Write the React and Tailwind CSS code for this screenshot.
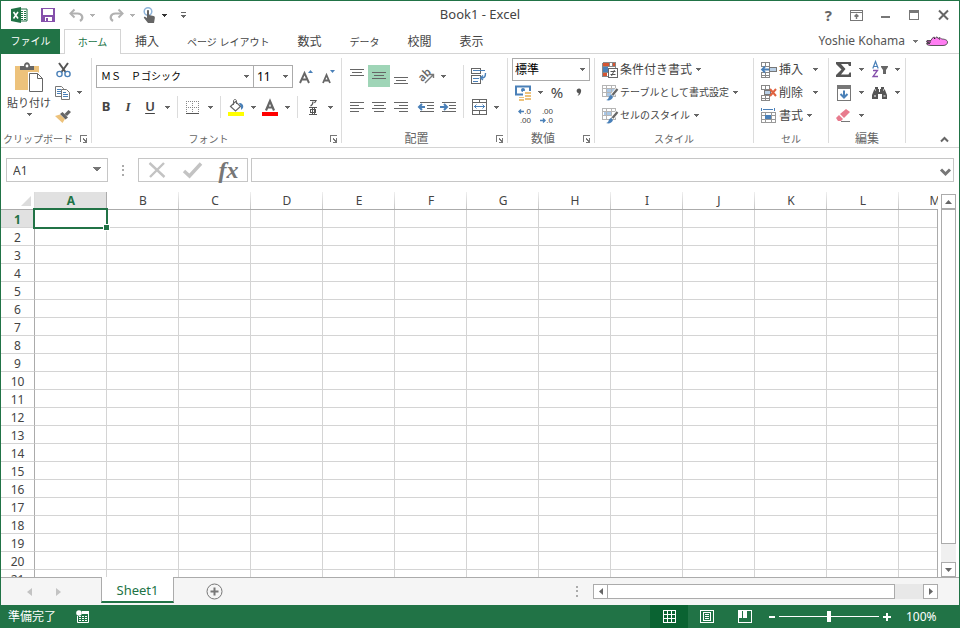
import { useState } from 'react';
import clsx from 'clsx';

const columns = ['A', 'B', 'C', 'D', 'E', 'F', 'G', 'H', 'I', 'J', 'K', 'L', 'M'];
const rows = Array.from({ length: 21 }, (_, i) => i + 1);

const tabs = [
  { label: '挿入' },
  { label: 'ページ レイアウト', kana: true },
  { label: '数式' },
  { label: 'データ', kana: true },
  { label: '校閲' },
  { label: '表示' },
];

// Small drawing helpers

const Icon = ({ w = 16, h = 16, crisp, className, children }) => (
  <svg
    width={w}
    height={h}
    viewBox={`0 0 ${w} ${h}`}
    fill="none"
    stroke="none"
    shapeRendering={crisp ? 'crispEdges' : 'auto'}
    className={clsx('shrink-0 overflow-visible', className)}
    aria-hidden="true"
  >
    {children}
  </svg>
);

const Caret = ({ className }) => (
  <Icon w={5} h={3} crisp className={className || 'text-[#666]'}>
    <path d="M0 0h5v1H0zM1 1h3v1H1zM2 2h1v1H2z" fill="currentColor" />
  </Icon>
);

const CaretButton = ({ label, className }) => (
  <button aria-label={label} className="flex h-[22px] w-3 shrink-0 items-center justify-center">
    <Caret className={className} />
  </button>
);

const Tool = ({ label, active, className, children }) => (
  <button
    aria-label={label}
    className={clsx('flex h-[22px] w-[22px] shrink-0 items-center justify-center', active && 'bg-[#9fd5b7]', className)}
  >
    {children}
  </button>
);

const Separator = () => <span className="mx-1 h-[22px] w-px shrink-0 bg-[#dcdcdc]" />;

const Dots = () => (
  <Icon w={2} h={11} crisp>
    <path d="M0 0h2v2H0zM0 4h2v2H0zM0 9h2v2H0z" fill="#ababab" />
  </Icon>
);

const Lines = ({ rows: bars }) => (
  <Icon w={14} h={14} crisp>
    {bars.map(([x, y, width]) => (
      <rect key={y} x={x} y={y} width={width} height="1" fill="#666" />
    ))}
  </Icon>
);

// Quick access and title bar icons

const ExcelLogo = () => (
  <Icon>
    <path d="M9 2h7v12H9z" fill="#fff" stroke="#217346" />
    <path d="M10 4h2v1h-2zM13 4h2v1h-2zM10 6h2v1h-2zM13 6h2v1h-2zM10 8h2v1h-2zM13 8h2v1h-2zM10 10h2v1h-2zM13 10h2v1h-2zM10 12h2v1h-2zM13 12h2v1h-2z" fill="#217346" />
    <path d="M0 2 10 0v16L0 14z" fill="#217346" />
    <path d="m2.500 5 4.500 6.500M7 5l-4.500 6.500" stroke="#fff" strokeWidth="1.600" />
  </Icon>
);

const SaveIcon = () => (
  <Icon w={14} h={14} crisp>
    <path d="M0 0h14v14H0z" fill="#8550ab" />
    <path d="M2 1h10v6H2zM4 9h7v4H4z" fill="#fff" />
    <path d="M5 10h2v3H5z" fill="#8550ab" />
  </Icon>
);

const UndoIcon = ({ flip }) => (
  <Icon w={15} h={13} className={flip && '-scale-x-100'}>
    <path d="M5.500.5 1.500 4.500l4 4" stroke="#b1b1b1" strokeWidth="2" />
    <path d="M2 4.500h6.500c5 0 6.500 5 2.500 7.500" stroke="#b1b1b1" strokeWidth="2.200" />
  </Icon>
);

const TouchIcon = () => (
  <Icon w={13} h={16}>
    <circle cx="5" cy="4.500" r="3.800" stroke="#8fb4d9" strokeWidth="1.500" />
    <path d="M4 4c0-1.300 2-1.300 2 0v4l4.500 1c1.200.3 1.500 1 1.300 2.200L11 16H5L1 11c-.6-1 .5-1.800 1.400-1.100L4 11z" fill="#666" />
  </Icon>
);

const CustomizeIcon = () => (
  <Icon w={7} h={7} crisp>
    <path d="M0 0h5v1H0zM0 3h5v1H0zM1 4h3v1H1zM2 5h1v1H2z" fill="#666" />
  </Icon>
);

const RibbonOptionsIcon = () => (
  <Icon w={13} h={11}>
    <path d="M.5.5h12v10H.5zM.5 2.500h12" stroke="#777" shapeRendering="crispEdges" />
    <path d="M6.500 9V5M4.500 6.500l2-2 2 2" stroke="#777" strokeWidth="1.400" />
  </Icon>
);

const Pig = () => (
  <Icon w={22} h={10}>
    <path d="M1 4.500h4l1-2 2-1.500 1.500 1L11 .8 12 2.500l2-1 1.500 1.500c3 0 6 1 6 3S20 9.500 17 9.500H6C3 9.500.5 9 .5 7.500H4L.5 6z" fill="#ff7df2" stroke="#333" strokeWidth=".8" />
    <path d="M1 6h4M8 2.500h1M13 3h1" stroke="#222" />
  </Icon>
);

// Clipboard

const PasteIcon = () => (
  <Icon w={29} h={31}>
    <path d="M0 4h24v24H0z" fill="#edc27b" />
    <path d="M5 4h4c0-5 6-5 6 0h4v4H5z" fill="#666" />
    <circle cx="12" cy="4" r="1.400" fill="#fff" />
    <path d="M13 10h10l6 6v15H13z" fill="#fff" />
    <path d="M14.500 11.500h8l5 5v13h-13z" fill="#fff" stroke="#666" />
    <path d="M22.500 11.500v5h5" stroke="#666" />
  </Icon>
);

const CutIcon = () => (
  <Icon w={15} h={16}>
    <path d="m3 1 6.500 9M12 1 5.500 10" stroke="#555" strokeWidth="2" />
    <circle cx="3.500" cy="12" r="2.600" stroke="#4a80b8" strokeWidth="1.400" />
    <circle cx="11.500" cy="12" r="2.600" stroke="#4a80b8" strokeWidth="1.400" />
  </Icon>
);

const CopyIcon = () => (
  <Icon w={16} h={14}>
    <path d="M.5.5h6l2 2v8h-8z" stroke="#777" fill="#fff" />
    <path d="M2 3h4v1H2zM2 5h4v1H2zM2 7h4v1H2z" fill="#4a80b8" />
    <path d="M6.500 3.500h5l3 3v7h-8z" stroke="#777" fill="#fff" />
    <path d="M8 6h3v1H8zM8 8h5v1H8zM8 10h5v1H8z" fill="#4a80b8" />
  </Icon>
);

const BrushIcon = () => (
  <Icon w={16} h={14}>
    <path d="M0 7 5 5.500 10 10l-2.500 4z" fill="#edc27b" />
    <path d="m5 5 2.500-2L13 8.500 10.500 10.500z" fill="#666" />
    <path d="m9.500 5 4-4L16 3l-4 4z" fill="#666" />
  </Icon>
);

// Font

const BordersIcon = () => (
  <Icon w={14} h={13} crisp>
    <path d="M.5 0v11M6.500 0v11M12.500 0v11M0 .5h13M0 6.500h13" stroke="#888" strokeDasharray="1 1" />
    <path d="M0 12h13v1H0z" fill="#555" />
  </Icon>
);

const FillIcon = () => (
  <Icon w={16} h={17}>
    <path d="M0 13h16v4H0z" fill="#ff0" />
    <path d="m2.500 7.500 5-5 5 5-5 4.500z" fill="#fff" stroke="#666" strokeWidth="1.200" />
    <path d="M5.500 6V2c0-2 3-2 3 0v3" stroke="#666" />
    <path d="M11 4c3 0 5 2 4 5l-2 2V8z" fill="#4a80b8" />
  </Icon>
);

const FontColorIcon = () => (
  <Icon w={16} h={17}>
    <path d="M0 13h16v4H0z" fill="#f00" />
    <path d="M4 11.500 8 2l4 9.500M5.500 8.500h5" stroke="#666" strokeWidth="2.200" />
  </Icon>
);

const RubyIcon = () => (
  <Icon w={9} h={17}>
    <path d="M1 1.500h6L5.500 4M4 2.500C4 5 3.500 6 1.500 7" stroke="#555" strokeWidth="1.200" />
    <path d="M0 8.500h8M0 15.500h8M1.500 10.500h5v3h-5zM3.500 8v8M5.500 8v8" stroke="#555" shapeRendering="crispEdges" />
  </Icon>
);

const GrowFont = ({ down }) => (
  <Icon w={14} h={15}>
    {down ? (
      <path d="m1 14 3.500-8L8 14M2 11.500h5" stroke="#666" strokeWidth="1.800" />
    ) : (
      <path d="M0 14 4.500 4 9 14M1.500 10.500h6" stroke="#666" strokeWidth="1.900" />
    )}
    <path d={down ? 'M8 1h5l-2.500 3z' : 'M8 4h5l-2.500-3z'} fill="#4a80b8" />
  </Icon>
);

// Alignment

const OrientationIcon = () => (
  <span className="relative flex h-4 w-4 items-center justify-center">
    <span className="-rotate-45 pb-1 text-[11px] font-semibold leading-3 text-[#666]">ab</span>
    <Icon className="absolute inset-0">
      <path d="m7 15 8-8M11.500 6.500h4V10" stroke="#777" strokeWidth="1.400" />
    </Icon>
  </span>
);

const IndentIcon = ({ right }) => (
  <Icon w={17} h={12}>
    <path d="M2 1.500h14M9 4.500h7M9 7.500h7M2 10.500h14" stroke="#666" shapeRendering="crispEdges" />
    <path d={right ? 'M0 6h7M4 3l3 3-3 3' : 'M7 6H1M4 3 1 6l3 3'} stroke="#4a80b8" strokeWidth="2" />
  </Icon>
);

const WrapIcon = () => (
  <Icon w={16} h={16}>
    <path d="M.5.5h9v5h-9zM.5 7.500h9v8h-9z" stroke="#666" shapeRendering="crispEdges" />
    <path d="M2 2.500h12M2 10.500h6M2 13.500h5" stroke="#4a80b8" shapeRendering="crispEdges" />
    <path d="M14.500 5c0 4-1 5-4.500 5M12 7.500 9.500 10l2.500 2" stroke="#4a80b8" strokeWidth="1.400" />
  </Icon>
);

const MergeIcon = () => (
  <Icon w={15} h={16}>
    <path d="M.5.5h14v15H.5zM.5 3.500h14M.5 11.500h14M7.500 0v3.500M7.500 11.500V16" stroke="#666" shapeRendering="crispEdges" />
    <path d="M2 7.500h11M4.500 5.500l-2 2 2 2M10.500 5.500l2 2-2 2" stroke="#4a80b8" />
  </Icon>
);

// Number

const CurrencyIcon = () => (
  <Icon w={17} h={16}>
    <path d="M1 1.500h14v8H1z" stroke="#4a80b8" strokeWidth="2" />
    <circle cx="8" cy="5" r="2" fill="#4a80b8" />
    <path d="M8 6h9v10H3v-5h5z" fill="#fff" />
    <path d="M10 7h6v2h-6zM10 10h6v2h-6zM10 13h6v2h-6zM4 12h5v1H4zM4 14h5v2H4z" fill="#edc27b" />
  </Icon>
);

const SmallArrow = ({ right }) => (
  <Icon w={6} h={5}>
    <path d={right ? 'M0 2.500h5M3 .5l2 2-2 2' : 'M6 2.500H1M3 .5l-2 2 2 2'} stroke="#4a80b8" strokeWidth="1.400" />
  </Icon>
);

const DecimalIcon = ({ less }) => (
  <span className="flex w-4 flex-col font-['Liberation_Sans'] text-[8px] leading-[9px] text-[#444]">
    <span className="flex items-center justify-end">
      {!less && <SmallArrow />}
      <span>{less ? '.00' : '.0'}</span>
    </span>
    <span className="flex items-center justify-end">
      {less && <SmallArrow right />}
      <span>{less ? '.0' : '.00'}</span>
    </span>
  </span>
);

// Styles

const ConditionalIcon = () => (
  <Icon>
    <path d="M1 1h6v3H1zM1 11h4v3H1z" fill="#d65532" />
    <path d="M11 1h3v3h-3z" fill="#d65532" />
    <path d="M1 5h5v5H1z" fill="#4a80b8" />
    <path d="M.5.5h13v5M.5.500v14H6M.5 4.500h13M.5 10.500H6M7.500 0v5M10.500 0v5" stroke="#888" shapeRendering="crispEdges" />
    <path d="M6.500 6.500h9v9h-9z" fill="#fff" stroke="#666" shapeRendering="crispEdges" />
    <path d="M8.500 9.500h5M8.500 12.500h5M12.500 8l-3 6" stroke="#555" />
  </Icon>
);

const TableStyleIcon = ({ cell }) => (
  <Icon>
    <path d={cell ? 'M2 4h8v4H2z' : 'M5 4h8v8H5z'} fill="#a9c7e6" />
    <path d="M.5.5h13v11H.5zM.5 3.500h13M4.500 0v12M9.500 0v12M.5 7.500h13" stroke="#b5b5b5" shapeRendering="crispEdges" />
    <path d="m15.500 4-5 6" stroke="#fff" strokeWidth="4" />
    <path d="m15.500 4-5 6" stroke="#666" strokeWidth="2.200" />
    <path d="M4 15c3 0 2-4 5-5l2 2c-1 3-4 4-7 3z" fill="#4a80b8" />
  </Icon>
);

// Cells

const InsertCellsIcon = () => (
  <Icon>
    <path d="M.5.5h8v4h-8zM4.500 0v5M.5 10.500h8v5h-8zM4.500 10v6M.5 13h8" stroke="#888" shapeRendering="crispEdges" />
    <path d="M8.500 5.500h7v4h-7z" fill="#b8cfe6" stroke="#777" shapeRendering="crispEdges" />
    <path d="M8 7.500H1M4 4.500l-3 3 3 3" stroke="#4a80b8" strokeWidth="1.800" />
  </Icon>
);

const DeleteCellsIcon = () => (
  <Icon>
    <path d="M.5.5h8v4h-8zM4.500 0v5M.5 10.500h8v5h-8zM4.500 10v6M.5 13h8" stroke="#888" shapeRendering="crispEdges" />
    <path d="M3.500 5.500h6v4h-6z" fill="#b8cfe6" stroke="#777" shapeRendering="crispEdges" />
    <path d="m9 4 6 7M15 4l-6 7" stroke="#e0623f" strokeWidth="2" />
  </Icon>
);

const FormatCellsIcon = () => (
  <Icon>
    <path d="M.5 0v3M13.500 0v3M2 1.500h10" stroke="#4a80b8" />
    <path d="M.5 4.500h14v10H.5zM.5 7.500h14M.5 11.500h14M4.500 4v11M10.500 4v11" stroke="#999" shapeRendering="crispEdges" />
    <path d="M4 7h6v4H4z" fill="#4a80b8" />
  </Icon>
);

// Editing

const SumIcon = () => (
  <Icon w={16} h={15}>
    <path d="M0 0h15v4h-2l-1-2H5l4.500 5L5 12.500h7.500l1-2H15V15H0v-2l5.500-5.500L0 2z" fill="#555" />
  </Icon>
);

const SortIcon = () => (
  <Icon w={16} h={17}>
    <path d="m.8 7.500 2.700-7 2.700 7M1.500 5.500h4" stroke="#4a80b8" strokeWidth="1.200" />
    <path d="M1 9.500h4.500L1 15.500h5" stroke="#8550ab" strokeWidth="1.300" />
    <path d="M9 5h7v1l-2 3v4h-3V9L9 6z" fill="#666" />
  </Icon>
);

const FillDownIcon = () => (
  <Icon w={14} h={16}>
    <path d="M.5 1.500h13v14H.5z" stroke="#777" shapeRendering="crispEdges" />
    <path d="M0 0h14v4H0z" fill="#777" />
    <path d="M7 5.500v7M3.500 9 7 12.500 10.500 9" stroke="#4a80b8" strokeWidth="2" />
  </Icon>
);

const FindIcon = () => (
  <Icon w={16} h={14}>
    <path d="M3 1h3v2h1v3h1V3h1V1h3v2l1 1 2 5v4h-5V8H6v5H0V9l2-5 1-1z" fill="#555" />
    <path d="M2 10h2M11.500 10h2M7 5h1M3 4h1M11 4h1" stroke="#fff" />
  </Icon>
);

const EraserIcon = () => (
  <Icon w={16} h={14}>
    <path d="m4 5 6-5 4 3-6 6z" fill="#e87b8e" />
    <path d="m3 6 4 4-2 2H2L0 9z" fill="#e87b8e" />
    <path d="M5 12.500h9" stroke="#777" />
  </Icon>
);

const Launcher = () => (
  <Icon w={8} h={8} crisp>
    <path d="M0 0h7v1H1v6H0zM3 3h1v1h1v1h1V3h1v5H3V7h2V6H4V5H3z" fill="#777" />
  </Icon>
);

const Group = ({ title, kana, launcher, className, children }) => (
  <section aria-label={title} className={clsx('my-1 flex shrink-0 flex-col border-r border-[#dcdcdc]', className)}>
    <div className="min-h-0 flex-1">{children}</div>
    <div className="relative flex h-[10px] items-center justify-center pt-[2px]">
      <span className={clsx('text-[#666]', launcher && 'pr-4', kana ? 'text-[10px]' : 'text-xs')}>{title}</span>
      {launcher && (
        <button aria-label={`${title}の設定`} className="absolute right-[3px] top-[2px]">
          <Launcher />
        </button>
      )}
    </div>
  </section>
);

const MenuRow = ({ icon, label, kana, spread }) => (
  <button className="flex h-[23px] w-full items-center whitespace-nowrap pl-[7px]">
    {icon}
    <span className={clsx('ml-[2px]', kana ? 'text-[10px]' : 'text-xs')}>{label}</span>
    <Caret className={clsx('text-[#666]', spread ? 'ml-[10px]' : 'ml-1')} />
  </button>
);

const TitleBar = () => (
  <div className="flex h-7 shrink-0 items-center">
    <div className="flex flex-1 items-center pl-[10px]">
      <ExcelLogo />
      <button aria-label="上書き保存" className="ml-[14px]"><SaveIcon /></button>
      <button aria-label="元に戻す" className="ml-[14px]"><UndoIcon /></button>
      <button aria-label="元に戻す履歴" className="ml-[6px]"><Caret className="text-[#b1b1b1]" /></button>
      <button aria-label="やり直し" className="ml-[14px]"><UndoIcon flip /></button>
      <button aria-label="やり直し履歴" className="ml-[6px]"><Caret className="text-[#b1b1b1]" /></button>
      <button aria-label="タッチ モード" className="ml-[8px]"><TouchIcon /></button>
      <button aria-label="モードの選択" className="ml-[6px]"><Caret className="text-[#333]" /></button>
      <button aria-label="カスタマイズ" className="ml-[14px]"><CustomizeIcon /></button>
    </div>
    <h1 className="text-[13px]">Book1 - Excel</h1>
    <div className="flex flex-1 items-center justify-end gap-[18px] pr-[10px] text-[#666]">
      <button aria-label="ヘルプ" className="text-[15px] font-bold leading-5">?</button>
      <button aria-label="リボンの表示オプション"><RibbonOptionsIcon /></button>
      <button aria-label="最小化">
        <Icon w={10} h={10} crisp><path d="M0 6h9v2H0z" fill="#777" /></Icon>
      </button>
      <button aria-label="最大化">
        <Icon w={11} h={10} crisp><path d="M0 0h10v10H0zM1 3v6h8V3z" fillRule="evenodd" fill="#777" /></Icon>
      </button>
      <button aria-label="閉じる">
        <Icon w={11} h={10}><path d="m1 .5 9 9M10 .5l-9 9" stroke="#666" strokeWidth="2" /></Icon>
      </button>
    </div>
  </div>
);

const TabBar = () => (
  <nav className="flex h-[25px] shrink-0 items-stretch border-b border-[#d4d4d4]">
    <button className="-mb-px w-[59px] bg-[#217346] text-[10px] text-white">ファイル</button>
    <button className="-mb-px ml-1 w-[57px] border border-b-0 border-[#d4d4d4] bg-white text-[10px] text-[#217346]">ホーム</button>
    {tabs.map((tab) => (
      <button key={tab.label} className={clsx('whitespace-nowrap px-[14px] pt-[2px]', tab.kana ? 'text-[10px]' : 'text-xs')}>
        {tab.label}
      </button>
    ))}
    <button className="ml-auto flex items-center pr-[11px] text-xs text-[#555]">
      Yoshie Kohama
      <Caret className="ml-2 mr-2 text-[#777]" />
      <Pig />
    </button>
  </nav>
);

const Ribbon = () => (
  <div className="flex h-[94px] shrink-0 border-b border-[#d4d4d4]">
    <Group title="クリップボード" kana launcher className="w-[91px]">
      <div className="flex pl-1">
        <button className="flex w-12 flex-col items-center pt-1">
          <PasteIcon />
          <span className="whitespace-nowrap text-[11px] leading-5">貼り付け</span>
          <Caret />
        </button>
        <div className="flex flex-col">
          <button aria-label="切り取り" className="flex h-[23px] w-5 items-center justify-center"><CutIcon /></button>
          <div className="flex h-[23px] items-center">
            <button aria-label="コピー" className="flex w-5 justify-center"><CopyIcon /></button>
            <CaretButton label="コピーのオプション" />
          </div>
          <button aria-label="書式のコピー" className="flex h-[23px] w-5 items-center justify-center"><BrushIcon /></button>
        </div>
      </div>
    </Group>

    <Group title="フォント" kana launcher className="w-[250px]">
      <div className="flex items-center pl-1 pt-[7px]">
        <div className="relative">
          <select aria-label="フォント名" className="block h-[23px] w-[158px] appearance-none border border-[#ababab] pl-1 text-[10px] text-black">
            <option>ＭＳ　Ｐゴシック</option>
          </select>
          <Caret className="pointer-events-none absolute right-[5px] top-[10px] text-[#666]" />
        </div>
        <div className="relative -ml-px">
          <select aria-label="フォント サイズ" className="block h-[23px] w-10 appearance-none border border-[#ababab] pl-[3px] text-xs text-black">
            <option>11</option>
          </select>
          <Caret className="pointer-events-none absolute right-[5px] top-[10px] text-[#666]" />
        </div>
        <Tool label="フォント サイズの拡大" className="ml-[3px]"><GrowFont /></Tool>
        <Tool label="フォント サイズの縮小"><GrowFont down /></Tool>
      </div>
      <div className="mt-2 flex items-center pl-[3px] text-[13px] text-[#444]">
        <Tool label="太字"><b>B</b></Tool>
        <Tool label="斜体"><i className="font-['Liberation_Serif'] font-bold">I</i></Tool>
        <Tool label="下線"><span className="font-semibold underline underline-offset-2">U</span></Tool>
        <CaretButton label="下線の種類" />
        <Separator />
        <Tool label="罫線"><BordersIcon /></Tool>
        <CaretButton label="罫線の種類" />
        <Separator />
        <Tool label="塗りつぶしの色"><FillIcon /></Tool>
        <CaretButton label="塗りつぶしの色の選択" />
        <Tool label="フォントの色"><FontColorIcon /></Tool>
        <CaretButton label="フォントの色の選択" />
        <Separator />
        <Tool label="ふりがな"><RubyIcon /></Tool>
        <CaretButton label="ふりがなの設定" />
      </div>
    </Group>

    <Group title="配置" launcher className="w-[166px]">
      <div className="flex pl-1 pt-[7px]">
        <div className="flex flex-col gap-2">
          <div className="flex h-[23px]">
            <Tool label="上揃え"><Lines rows={[[0, 0, 14], [2, 3, 10], [0, 6, 14]]} /></Tool>
            <Tool label="上下中央揃え" active><Lines rows={[[0, 3, 14], [2, 6, 10], [0, 9, 14]]} /></Tool>
            <Tool label="下揃え"><Lines rows={[[0, 8, 14], [2, 11, 10], [0, 14, 14]]} /></Tool>
            <Tool label="方向" className="ml-[3px]"><OrientationIcon /></Tool>
            <CaretButton label="方向の選択" />
          </div>
          <div className="flex">
            <Tool label="左揃え"><Lines rows={[[0, 2, 14], [0, 5, 9], [0, 8, 14], [0, 11, 9]]} /></Tool>
            <Tool label="中央揃え"><Lines rows={[[0, 2, 14], [2, 5, 10], [0, 8, 14], [2, 11, 10]]} /></Tool>
            <Tool label="右揃え"><Lines rows={[[0, 2, 14], [5, 5, 9], [0, 8, 14], [5, 11, 9]]} /></Tool>
            <Tool label="インデントを減らす" className="ml-[3px]"><IndentIcon /></Tool>
            <Tool label="インデントを増やす"><IndentIcon right /></Tool>
          </div>
        </div>
        <span className="mx-1 w-px bg-[#dcdcdc]" />
        <div className="flex flex-col gap-[9px]">
          <Tool label="折り返して全体を表示する"><WrapIcon /></Tool>
          <div className="flex">
            <Tool label="セルを結合して中央揃え"><MergeIcon /></Tool>
            <CaretButton label="結合のオプション" />
          </div>
        </div>
      </div>
    </Group>

    <Group title="数値" launcher className="w-[87px]">
      <div className="relative mx-1">
        <select aria-label="表示形式" className="block h-[23px] w-full appearance-none border border-[#ababab] pl-[2px] text-xs text-black">
          <option>標準</option>
        </select>
        <Caret className="pointer-events-none absolute right-[5px] top-[10px] text-[#666]" />
      </div>
      <div className="flex h-[23px] items-center pl-1">
        <Tool label="通貨表示形式"><CurrencyIcon /></Tool>
        <CaretButton label="通貨の選択" />
        <Tool label="パーセント スタイル" className="text-[15px]">%</Tool>
        <Tool label="桁区切りスタイル">
          <Icon w={6} h={9}><path d="M1 1.500C3-.5 6 1 5 4c-.5 2-1.500 3-3.500 4 1-1.500 1.500-2 1-3C1 5 0 3 1 1.500z" fill="#555" /></Icon>
        </Tool>
      </div>
      <div className="flex h-[23px] items-center pl-1">
        <Tool label="小数点以下の表示桁数を増やす"><DecimalIcon /></Tool>
        <Tool label="小数点以下の表示桁数を減らす"><DecimalIcon less /></Tool>
      </div>
    </Group>

    <Group title="スタイル" kana className="w-[159px]">
      <MenuRow icon={<ConditionalIcon />} label="条件付き書式" />
      <MenuRow icon={<TableStyleIcon />} label="テーブルとして書式設定" kana />
      <MenuRow icon={<TableStyleIcon cell />} label="セルのスタイル" kana />
    </Group>

    <Group title="セル" kana className="w-[75px]">
      <MenuRow icon={<InsertCellsIcon />} label="挿入" spread />
      <MenuRow icon={<DeleteCellsIcon />} label="削除" spread />
      <MenuRow icon={<FormatCellsIcon />} label="書式" />
    </Group>

    <Group title="編集" className="w-[77px]">
      <div className="grid grid-cols-2 pl-1">
        <div className="flex h-[23px] items-center">
          <Tool label="合計"><SumIcon /></Tool><CaretButton label="関数の選択" />
        </div>
        <div className="flex h-[23px] items-center">
          <Tool label="並べ替えとフィルター"><SortIcon /></Tool><CaretButton label="並べ替えの選択" />
        </div>
        <div className="flex h-[23px] items-center">
          <Tool label="フィル"><FillDownIcon /></Tool><CaretButton label="フィルの選択" />
        </div>
        <div className="flex h-[23px] items-center">
          <Tool label="検索と選択"><FindIcon /></Tool><CaretButton label="検索の選択" />
        </div>
        <div className="flex h-[23px] items-center">
          <Tool label="クリア"><EraserIcon /></Tool><CaretButton label="クリアの選択" />
        </div>
      </div>
    </Group>

    <button aria-label="リボンを折りたたむ" className="mb-1 ml-auto mr-[10px] self-end">
      <Icon w={9} h={7}><path d="m1 5.500 3.500-3.500L8 5.500" stroke="#666" strokeWidth="2" /></Icon>
    </button>
  </div>
);

const FormulaBar = ({ cell }) => {
  const [value, setValue] = useState('');

  return (
    <div className="flex shrink-0 items-center px-[5px] py-[10px]">
      <div className="relative">
        <input aria-label="名前ボックス" readOnly value={cell} className="block h-6 w-[102px] border border-[#c6c6c6] px-[6px] text-xs" />
        <Icon w={9} h={5} crisp className="pointer-events-none absolute right-[6px] top-[9px]">
          <path d="M0 0h8v1H0zM1 1h6v1H1zM2 2h4v1H2zM3 3h2v1H3z" fill="#777" />
        </Icon>
      </div>
      <span className="mx-[14px]"><Dots /></span>
      <div className="flex h-6 w-[110px] items-center justify-around border border-[#c6c6c6]">
        <button aria-label="キャンセル">
          <Icon w={18} h={16}><path d="m1.500 1 15 14M16 1 2 15" stroke="#c3c3c3" strokeWidth="2.400" /></Icon>
        </button>
        <button aria-label="入力">
          <Icon w={19} h={16}><path d="m1 9 5.500 5L18 1.500" stroke="#c3c3c3" strokeWidth="3.400" /></Icon>
        </button>
        <button aria-label="関数の挿入" className="font-['Liberation_Serif'] text-2xl font-bold italic leading-5 text-[#777]">fx</button>
      </div>
      <div className="relative ml-[3px] flex-1">
        <input
          aria-label="数式バー"
          value={value}
          onChange={(e) => setValue(e.target.value)}
          className="block h-6 w-full border border-[#c6c6c6] px-1 text-xs outline-none"
        />
        <button aria-label="数式バーの展開" className="absolute right-[3px] top-[10px]">
          <Icon w={11} h={9}><path d="m1 1.500 4.500 4.500L10 1.500" stroke="#777" strokeWidth="3" /></Icon>
        </button>
      </div>
    </div>
  );
};

const Sheet = () => (
  <div className="relative min-w-0 flex-1 overflow-hidden">
    <table className="w-[970px] table-fixed border-separate border-spacing-0 text-xs leading-[14px]">
      <colgroup>
        <col className="w-[34px]" />
        {columns.map((c) => <col key={c} className="w-[72px]" />)}
      </colgroup>
      <thead>
        <tr className="h-[18px]">
          <th aria-label="すべて選択" className="relative border-b border-r border-b-[#ababab] border-r-[#dcdcdc] p-0">
            <Icon w={10} h={10} className="absolute bottom-[3px] right-[3px]"><path d="M10 0v10H0z" fill="#dcdcdc" /></Icon>
          </th>
          {columns.map((c) => (
            <th
              key={c}
              scope="col"
              className={clsx(
                'relative border-b border-[#ababab] p-0',
                c === 'A' ? 'bg-[#e1e1e1] font-bold text-[#217346]' : 'font-normal'
              )}
            >
              {c}
              <span
                className={clsx(
                  'absolute inset-y-0 right-0 w-px',
                  c === 'A' ? 'bg-[#ababab]' : 'bg-gradient-to-b from-[#f0f0f0] to-[#c6c6c6]'
                )}
              />
            </th>
          ))}
        </tr>
      </thead>
      <tbody>
        {rows.map((r) => (
          <tr key={r} className="h-[18px]">
            <th
              scope="row"
              className={clsx(
                'border-b border-r border-b-[#d4d4d4] border-r-[#ababab] p-0 pt-[3px]',
                r === 1 ? 'bg-[#e1e1e1] font-bold text-[#217346]' : 'font-normal'
              )}
            >
              {r}
            </th>
            {columns.map((c) => (
              <td key={c} className="relative border-b border-r border-[#d4d4d4] p-0">
                {c === 'A' && r === 1 && (
                  <span className="absolute -bottom-[2px] -left-[2px] -right-[2px] -top-[2px] z-10 border-2 border-[#217346]">
                    <span className="absolute -bottom-[4px] -right-[4px] h-[7px] w-[7px] border border-white bg-[#217346]" />
                  </span>
                )}
              </td>
            ))}
          </tr>
        ))}
      </tbody>
    </table>
    {/* frame edge, drawn over the clipped last column */}
    <span className="absolute bottom-0 right-0 top-[17px] w-px bg-[#ababab]" />
  </div>
);

const scrollButton = 'flex h-[15px] w-[15px] shrink-0 items-center justify-center border border-[#ababab] bg-white';

const Arrow = ({ d, w = 7, h = 4, fill = '#666' }) => (
  <Icon w={w} h={h}><path d={d} fill={fill} /></Icon>
);

const VerticalScroll = () => (
  <div className="flex w-[21px] shrink-0 flex-col bg-white pl-[3px] pt-[2px]">
    <button aria-label="上へスクロール" className={scrollButton}><Arrow d="M0 4h7L3.500 0z" /></button>
    <div className="flex w-[15px] flex-1 flex-col bg-[#f0f0f0]">
      <div className="h-[95%] border border-[#ababab] bg-white" />
    </div>
    <button aria-label="下へスクロール" className={scrollButton}><Arrow d="M0 0h7L3.500 4z" /></button>
  </div>
);

const SheetTabs = () => (
  <div className="flex h-7 shrink-0 border-t border-[#ababab] bg-[#f5f5f5]">
    <div className="flex w-[100px] items-center gap-6 pl-[26px]">
      <button aria-label="前のシート"><Arrow w={5} h={8} d="M5 0v8L0 4z" fill="#c3c3c3" /></button>
      <button aria-label="次のシート"><Arrow w={5} h={8} d="M0 0v8l5-4z" fill="#c3c3c3" /></button>
    </div>
    <button className="-mt-px h-[26px] w-[73px] border-x border-b-2 border-x-[#ababab] border-b-[#217346] bg-white pt-[3px] text-[13px] text-[#217346]">
      Sheet1
    </button>
    <button aria-label="新しいシート" className="ml-8">
      <Icon w={17} h={17}>
        <circle cx="8.500" cy="8.500" r="7.500" stroke="#777" />
        <path d="M4.500 8.500h8M8.500 4.500v8" stroke="#777" strokeWidth="2" />
      </Icon>
    </button>
    <div className="ml-auto flex w-[383px] items-center pr-[21px]">
      <span className="mr-[15px]"><Dots /></span>
      <button aria-label="左へスクロール" className={scrollButton}><Arrow w={4} h={7} d="M4 0v7L0 3.500z" /></button>
      <div className="-ml-px flex h-[15px] flex-1 bg-[#e8e8e8]">
        <div className="w-[91%] border border-[#ababab] bg-white" />
      </div>
      <button aria-label="右へスクロール" className={scrollButton}><Arrow w={4} h={7} d="M0 0v7l4-3.500z" /></button>
    </div>
  </div>
);

const StatusBar = () => {
  const [zoom, setZoom] = useState(100);

  return (
    <footer className="flex h-[23px] shrink-0 items-center bg-[#217346] text-xs text-white">
      <span className="pl-[7px]">準備完了</span>
      <button aria-label="マクロの記録" className="ml-5">
        <Icon w={14} h={13}>
          <path d="M6 1.500h6.500v11h-11V6" stroke="#fff" />
          <path d="M6 1h7v3H6z" fill="#fff" />
          <circle cx="3" cy="3" r="2.800" fill="#fff" />
          <path d="M3 6h2v1H3zM6 6h2v1H6zM9 6h2v1H9zM3 8h2v1H3zM6 8h2v1H6zM9 8h2v1H9zM3 10h2v1H3zM6 10h2v1H6zM9 10h2v1H9z" fill="#fff" />
        </Icon>
      </button>
      <div className="ml-auto flex h-full">
        <button aria-label="標準" className="flex w-[38px] items-center justify-center bg-[#0a6332]">
          <Icon w={13} h={13} crisp><path d="M.5.5h12v12H.5zM4.500 0v13M8.500 0v13M0 4.500h13M0 8.500h13" stroke="#fff" /></Icon>
        </button>
        <button aria-label="ページ レイアウト" className="flex w-[38px] items-center justify-center">
          <Icon w={14} h={13} crisp>
            <path d="M.5.5h13v12H.5zM3.500 2.500h7v8h-7zM5 4.500h4M5 6.500h4M5 8.500h4" stroke="#fff" />
          </Icon>
        </button>
        <button aria-label="改ページ プレビュー" className="flex w-[38px] items-center justify-center">
          <Icon w={14} h={13} crisp>
            <path d="M.5.5h13v12H.5z" stroke="#fff" />
            <path d="M0 0h4v8H0zM5 0h4v8H5z" fill="#fff" />
          </Icon>
        </button>
      </div>
      <button aria-label="縮小" className="ml-[5px]">
        <Icon w={6} h={8} crisp><path d="M0 3h6v2H0z" fill="#fff" /></Icon>
      </button>
      <input
        type="range"
        aria-label="ズーム"
        min="0"
        max="200"
        value={zoom}
        onChange={(e) => setZoom(Number(e.target.value))}
        className="mx-1 h-3 w-[100px] appearance-none bg-transparent [&::-webkit-slider-runnable-track]:h-px [&::-webkit-slider-runnable-track]:bg-white [&::-webkit-slider-thumb]:-mt-[5px] [&::-webkit-slider-thumb]:h-[11px] [&::-webkit-slider-thumb]:w-1 [&::-webkit-slider-thumb]:appearance-none [&::-webkit-slider-thumb]:bg-white"
      />
      <button aria-label="拡大">
        <Icon w={8} h={8} crisp><path d="M0 3h8v2H0zM3 0h2v8H3z" fill="#fff" /></Icon>
      </button>
      <span className="w-[68px] pl-[15px]">{zoom}%</span>
    </footer>
  );
};

const App = () => (
  <div className="flex h-screen flex-col overflow-hidden border-x border-t border-[#217346] bg-white font-['Noto_Sans','Noto_Sans_CJK_JP',sans-serif] text-[#444]">
    <TitleBar />
    <TabBar />
    <Ribbon />
    <FormulaBar cell="A1" />
    <main className="flex min-h-0 flex-1">
      <Sheet />
      <VerticalScroll />
    </main>
    <SheetTabs />
    <StatusBar />
  </div>
);

export default App;
